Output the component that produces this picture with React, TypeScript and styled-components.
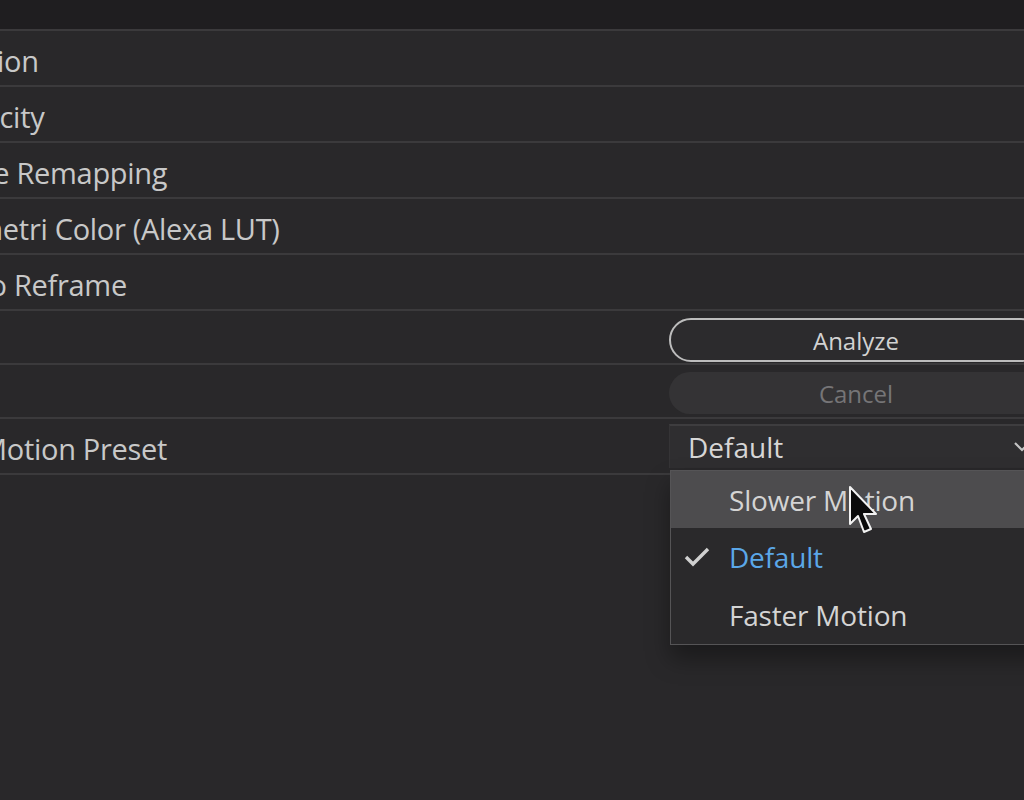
import styled, { createGlobalStyle } from "styled-components";

const GlobalStyle = createGlobalStyle`
  html, body {
    margin: 0;
    padding: 0;
    background: #29282a;
    overflow: hidden;
  }
  body {
    font-family: "Open Sans", "Noto Sans", sans-serif;
    color: #c9c9c9;
  }
`;

const Screen = styled.div`
  width: 1024px;
  height: 800px;
  overflow: hidden;
  background: #29282a;
`;

const Panel = styled.div`
  margin-left: -56px;
  width: 1140px;
  display: flex;
  flex-direction: column;
`;

const Header = styled.div`
  height: 29px;
  background: #1f1e20;
`;

const Row = styled.div<{ h: number; last?: boolean }>`
  position: relative;
  display: grid;
  grid-template-columns: 725px 1fr;
  align-items: center;
  height: ${(p) => p.h}px;
  box-sizing: border-box;
  border-top: 2px solid #3b3a3c;
  border-bottom: ${(p) => (p.last ? "2px solid #3b3a3c" : "none")};
`;

const Label = styled.div<{ indent?: boolean }>`
  padding-left: ${(p) => (p.indent ? 37 : 0)}px;
  padding-top: 4px;
  font-size: 29px;
  letter-spacing: -0.3px;
  color: #c8c8c8;
  white-space: nowrap;
`;

const Control = styled.div<{ top: number }>`
  align-self: start;
  margin-top: ${(p) => p.top}px;
  display: flex;
  align-items: center;
  width: 374px;
`;

const PillButton = styled.button<{ disabled?: boolean }>`
  width: 100%;
  height: ${(p) => (p.disabled ? 42 : 44)}px;
  border-radius: 22px;
  border: ${(p) => (p.disabled ? "none" : "2px solid #bdbdbd")};
  background: ${(p) => (p.disabled ? "#343335" : "#2c2b2d")};
  color: ${(p) => (p.disabled ? "#767577" : "#d2d2d2")};
  font-family: inherit;
  font-size: 24px;
  padding: 0;
  display: flex;
  align-items: center;
  justify-content: center;
`;

const Select = styled.div`
  width: 100%;
  height: 44px;
  box-sizing: border-box;
  background: #2f2e30;
  border-top: 2px solid #3e3d3f;
  border-left: 1px solid #353436;
  display: flex;
  align-items: center;
  justify-content: space-between;
  padding: 0 0 0 18px;
  font-size: 28px;
  color: #d6d6d6;
`;

const Chevron = styled.svg`
  margin-right: 12px;
`;

const Menu = styled.div`
  position: absolute;
  top: 51px;
  left: 726px;
  width: 380px;
  box-sizing: border-box;
  background: #2a292b;
  border: 1px solid #555456;
  box-shadow: 0 14px 22px rgba(0, 0, 0, 0.35);
  z-index: 2;
`;

const MenuItem = styled.div<{ active?: boolean; selected?: boolean }>`
  position: relative;
  height: ${(p) => (p.active ? 57 : 58)}px;
  display: flex;
  align-items: center;
  padding-left: 58px;
  font-size: 28px;
  letter-spacing: -0.2px;
  background: ${(p) => (p.active ? "#4d4c4e" : "transparent")};
  color: ${(p) => (p.selected ? "#5ba7e8" : "#d4d4d4")};
`;

const Check = styled.svg`
  position: absolute;
  left: 12px;
  top: 18px;
`;

const Cursor = styled.svg`
  position: absolute;
  left: 177px;
  top: 14px;
  z-index: 3;
`;

function App() {
  return (
    <Screen>
      <GlobalStyle />
      <Panel>
        <Header />
        <Row h={56}>
          <Label>Motion</Label>
        </Row>
        <Row h={56}>
          <Label>Opacity</Label>
        </Row>
        <Row h={56}>
          <Label>Time Remapping</Label>
        </Row>
        <Row h={56}>
          <Label>Lumetri Color (Alexa LUT)</Label>
        </Row>
        <Row h={56}>
          <Label>Auto Reframe</Label>
        </Row>
        <Row h={54}>
          <Label />
          <Control top={7}>
            <PillButton>Analyze</PillButton>
          </Control>
        </Row>
        <Row h={54}>
          <Label />
          <Control top={7}>
            <PillButton disabled>Cancel</PillButton>
          </Control>
        </Row>
        <Row h={58} last>
          <Label indent>Motion Preset</Label>
          <Control top={5}>
            <Select>
              Default
              <Chevron width="18" height="12" viewBox="0 0 18 12">
                <path d="M2 2 L9 9 L16 2" fill="none" stroke="#c4c4c4" strokeWidth="2.2" />
              </Chevron>
            </Select>
          </Control>
          <Menu>
            <MenuItem active>
              Slower Motion
              <Cursor width="30" height="54" viewBox="0 0 30 54">
                <path
                  d="M2 2 L2 39 L10 31 L16 47 L23 44 L16 29 L28 29 Z"
                  fill="#0a0a0a"
                  stroke="#f2f2f2"
                  strokeWidth="2"
                  strokeLinejoin="round"
                />
              </Cursor>
            </MenuItem>
            <MenuItem selected>
              <Check width="28" height="22" viewBox="0 0 28 22">
                <path d="M3 11 L10 18 L25 3" fill="none" stroke="#d0d0d0" strokeWidth="3.4" />
              </Check>
              Default
            </MenuItem>
            <MenuItem>Faster Motion</MenuItem>
          </Menu>
        </Row>
      </Panel>
    </Screen>
  );
}

export default App;
